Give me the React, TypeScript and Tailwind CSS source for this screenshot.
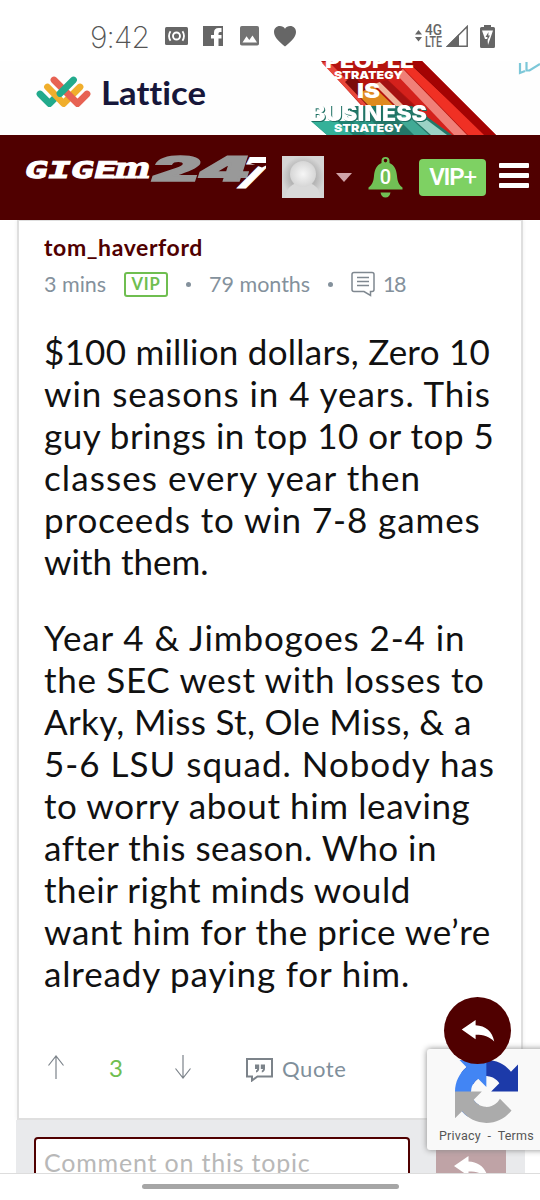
import type { ReactNode } from "react";
import cn from "clsx";

type LineProps = {
  children: ReactNode;
  className?: string;
};

function Line({ children, className }: LineProps) {
  return <span className={cn("block whitespace-nowrap", className)}>{children}</span>;
}

function StatusBar() {
  return (
    <div className="flex h-[61px] shrink-0 items-start pl-[90px] pr-[45px] pt-[20px] text-[#666]">
      <span className="w-[75px] font-['Inter'] text-[30px] font-extralight leading-[34px] tracking-[-0.900px] text-[#555]">
        9:42
      </span>
      <svg className="mt-[7px] h-[18px] w-[23px]" viewBox="0 0 23 18">
        <rect width="23" height="18" rx="1.5" fill="#666" />
        <circle cx="11.5" cy="9" r="3.5" fill="none" stroke="#fff" strokeWidth="1.9" />
        <path d="M5.5 4.3q-3 4.7 0 9.4M17.5 4.3q3 4.7 0 9.4" fill="none" stroke="#fff" strokeWidth="1.8" />
      </svg>
      <svg className="ml-[15px] mt-[6px] h-5 w-5" viewBox="0 0 20 20">
        <path fill="#666" d="M0 0h20v20h-4.500v-7.500h3V9h-3V7.500q0-1.500 1.500-1.500h1.500V2H15.500q-4.500 0-4.500 4.500V9H8v3.500h3V20H0z" />
      </svg>
      <svg className="ml-[17px] mt-[6px] h-5 w-[19px]" viewBox="0 0 19 20">
        <rect width="19" height="19.500" rx="1.800" fill="#737373" />
        <path d="M2.500 16.500l4-6.200 2.800 3.800 3.200-4.600 4.500 7z" fill="#fff" />
      </svg>
      <svg className="ml-[15px] mt-[6px] h-[21px] w-[22px]" viewBox="0 0 22 21">
        <path
          fill="#666"
          d="M11 20.500C6 16.500 0 11.500 0 6 0 2.500 2.500 0 5.800 0 8 0 10 1 11 2.800 12 1 14 0 16.200 0 19.500 0 22 2.500 22 6c0 5.500-6 10.500-11 14.500z"
        />
      </svg>
      <svg className="ml-auto mt-[10px] h-[12px] w-[7px]" viewBox="0 0 7 12">
        <path d="M0 4.500L3.500 0 7 4.500zM0 7h7l-3.500 4.500z" fill="#666" />
      </svg>
      <svg
        className="ml-[2px] mt-[4px] h-6 w-[19px] overflow-visible font-['Roboto'] text-[14px] font-medium"
        viewBox="0 0 19 24"
        fill="#666"
      >
        <text x="1" y="11" textLength="17" lengthAdjust="spacingAndGlyphs">
          4G
        </text>
        <text x="1" y="22.500" textLength="17" lengthAdjust="spacingAndGlyphs">
          LTE
        </text>
      </svg>
      <svg className="ml-[3px] mt-[5px] h-[22px] w-[22px]" viewBox="0 0 22 22">
        <path d="M1.500 21.300H21.200V1.500z" fill="none" stroke="#666" strokeWidth="1.500" />
        <path d="M0 22L13 9v13z" fill="#666" />
      </svg>
      <svg className="ml-[12px] mt-[5px] h-[23px] w-[15px]" viewBox="0 0 15 23">
        <path d="M4 0h7v2h2.500Q15 2 15 3.500v18Q15 23 13.500 23h-12Q0 23 0 21.500v-18Q0 2 1.500 2H4z" fill="#666" />
        <path d="M2 5.500h11L8 20l-.5-6H5z" fill="#fff" />
        <path d="M8.500 7L5.500 12h2l-.5 4 3-5.500H8.300z" fill="#666" />
      </svg>
    </div>
  );
}

function LatticeMark() {
  return (
    <svg
      className="h-8 w-[55px] overflow-visible"
      viewBox="36 76.500 55 32"
      fill="none"
      strokeWidth="6.800"
      strokeLinecap="round"
      strokeLinejoin="round"
    >
      <path d="M40 94.500l9.500 9.500 8-8" stroke="#22aa8c" />
      <path d="M47.500 87.500l16 16.500 16.500-16.500" stroke="#f0ae2c" />
      <path d="M54 80.500l23.500 23.500L87 94.500" stroke="#e76253" />
      <path d="M60 94l13.500-13.500" stroke="#22aa8c" />
    </svg>
  );
}

function AdBanner() {
  return (
    <div className="flex h-[74px] shrink-0 items-start overflow-hidden bg-[#fefefe] pl-[36px]">
      <div className="flex items-start pt-[15px]">
        <LatticeMark />
        <svg className="ml-[11px] h-8 w-[105px] overflow-visible" viewBox="0 0 105 32">
          <text
            x="-1"
            y="28.500"
            textLength="105"
            lengthAdjust="spacingAndGlyphs"
            className="font-['Lato'] text-[33px] font-bold [font-variant-ligatures:none]"
            fill="#17173a"
          >
            Lattice
          </text>
        </svg>
      </div>
      <svg className="ml-[93px] h-[74px] w-[240px]" viewBox="300 61 240 74">
        <path d="M321 61h101l74 74H388z" fill="#b5140f" />
        <path d="M322 63l68 72h12l-74-74z" fill="#e8473a" />
        <path d="M345 82l50 53h14l-56-60z" fill="#7c0b0b" />
        <path d="M358 95l14-10 52 50h-26z" fill="#df8a1e" />
        <path d="M374 84l6-2 53 53h-8z" fill="#f1b59b" />
        <path d="M380 82l8-2 55 55h-8z" fill="#a31212" />
        <path d="M388 80l12-7 62 62h-15z" fill="#d4211c" />
        <path d="M396 74l7-5 64 66h-13z" fill="#f08078" />
        <path d="M398 61h13l74 74h-5z" fill="#7f0505" />
        <path d="M403 68l8-3 75 70h-18z" fill="#f03024" />
        <path d="M408 61h14l74 74h-12z" fill="#a40303" />
        <path d="M311 121h117l15 14H327z" fill="#1f8271" />
        <path d="M311 121l16 14h26l-16-14z" fill="#35b199" />
        <path d="M346 106h66l40 29H370z" fill="#237768" />
        <path d="M352 121h20l14 14h-20z" fill="#2a9583" />
        <path d="M395 116l12-1 22 20h-15z" fill="#41aa95" />
        <path d="M413 119l14 1 20 15h-16z" fill="#9bd2c5" />
        <g fill="#fff" className="font-['Inter'] font-black">
          <text x="325" y="67.500" fontSize="18" textLength="89" lengthAdjust="spacingAndGlyphs">
            PEOPLE
          </text>
          <text x="334" y="79" fontSize="11" textLength="69" lengthAdjust="spacingAndGlyphs">
            STRATEGY
          </text>
          <text x="357" y="98" fontSize="20" textLength="23" lengthAdjust="spacingAndGlyphs">
            IS
          </text>
          <text
            x="310"
            y="120.500"
            fontSize="21"
            textLength="117"
            lengthAdjust="spacingAndGlyphs"
            className="drop-shadow-[1px_1px_0_#1c6f62]"
          >
            BUSINESS
          </text>
          <text x="334" y="132" fontSize="11" textLength="69" lengthAdjust="spacingAndGlyphs">
            STRATEGY
          </text>
        </g>
        <path d="M520 63v10l5-2M526.500 62v8.500h3L540 64" fill="none" stroke="#7cc7d8" strokeWidth="2.200" />
      </svg>
    </div>
  );
}

function SiteLogo() {
  return (
    <svg className="h-[36px] w-[242px]" viewBox="24 154 242 36">
      <g transform="translate(0 178) skewX(-14)" fill="#fff" stroke="#fff" strokeWidth="1">
        <text
          x="23"
          y="0"
          textLength="92"
          lengthAdjust="spacingAndGlyphs"
          className="font-['DejaVu_Sans_Mono'] text-[23px] font-bold"
        >
          GIGE
        </text>
        <text
          x="112"
          y="0"
          textLength="37"
          lengthAdjust="spacingAndGlyphs"
          className="font-['DejaVu_Serif'] text-[29px] font-bold"
        >
          m
        </text>
      </g>
      <g
        transform="translate(0 181) skewX(-18)"
        className="font-['Inter'] text-[34px] font-black"
        fill="#999"
        stroke="#999"
        strokeWidth="1.500"
      >
        <text x="149" y="0" textLength="98" lengthAdjust="spacingAndGlyphs">
          24
        </text>
      </g>
      <g
        transform="translate(0 187.500) skewX(-26)"
        className="font-['Inter'] font-black"
        fill="#fff"
        stroke="#fff"
        strokeWidth="1"
      >
        <text x="234" y="0" fontSize="42" textLength="25" lengthAdjust="spacingAndGlyphs">
          7
        </text>
      </g>
      {/* notch between the bar and the leg of the seven */}
      <path d="M250 163h16v2.500l-4 2z" fill="#500000" />
    </svg>
  );
}

function Header() {
  return (
    <header className="flex h-[85px] shrink-0 items-start bg-[#500000] pl-[24px] pt-[19px]">
      <SiteLogo />
      <svg className="ml-[16px] mt-[2px] size-[42px]" viewBox="0 0 42 42">
        <defs>
          <radialGradient id="back">
            <stop offset="0" stopColor="#e0e0e0" />
            <stop offset="0.600" stopColor="#b4b4b4" />
            <stop offset="1" stopColor="#d5d5d5" />
          </radialGradient>
          <radialGradient id="head">
            <stop offset="0" stopColor="#f6f6f6" />
            <stop offset="1" stopColor="#d6d6d6" />
          </radialGradient>
        </defs>
        <rect width="42" height="42" fill="url(#back)" />
        <path d="M3 42q2-13 12-15h12q10 2 12 15z" fill="#d9d9d9" />
        <circle cx="21" cy="18" r="13" fill="url(#head)" />
      </svg>
      <svg className="ml-[12px] mt-[19px] h-[9px] w-4" viewBox="0 0 16 9">
        <path d="M0 0h16L8 9z" fill="#cfa3a8" />
      </svg>
      <svg className="ml-4 mt-[3px] h-[41px] w-[35px]" viewBox="0 0 35 41">
        <path
          fill="#71c055"
          fillRule="evenodd"
          d="M17.500 0a4 4 0 0 1 4 4v2c5 2 7 7 7.500 13 .5 6 2 9 5.500 11.500v2H.500v-2C4 28 5.500 25 6 19c.5-6 2.500-11 7.500-13V4a4 4 0 0 1 4-4zm0 1.800a1.800 1.800 0 1 0 0 3.600 1.800 1.800 0 0 0 0-3.600zM12.500 35.500h10q-1 5-5 5t-5-5z"
        />
        <text x="17.500" y="26.500" textAnchor="middle" className="font-['Roboto'] text-[20px] font-medium" fill="#fff">
          0
        </text>
      </svg>
      <button className="ml-4 mt-[5px] h-[37px] w-[67px] rounded bg-[#7ed163] font-['Roboto'] text-[24px] font-semibold leading-[35px] tracking-[-1.200px] text-white">
        VIP<span className="font-normal">+</span>
      </button>
      <div className="ml-[13px] mt-[9px] flex w-[30px] flex-col gap-[5px]">
        <span className="h-[5px] rounded-[1px] bg-white" />
        <span className="h-[5px] rounded-[1px] bg-white" />
        <span className="h-[5px] rounded-[1px] bg-white" />
      </div>
    </header>
  );
}

function PostMeta() {
  return (
    <div className="mt-[5px] flex h-[30px] items-center text-[21.500px] text-[#84919c]">
      <span className="w-[79px] whitespace-nowrap">3 mins</span>
      <span className="ml-px flex h-[25px] w-[44px] items-center justify-center rounded-[3px] border-2 border-[#6fbe50] text-[16.500px] font-bold tracking-[0.800px] text-[#6fbe50]">
        VIP
      </span>
      <span className="ml-[18px] size-[5px] rounded-full bg-[#84919c]" />
      <span className="ml-[18px] w-[101px] whitespace-nowrap">79 months</span>
      <span className="ml-[18px] size-[5px] rounded-full bg-[#84919c]" />
      <svg className="ml-[18px] h-[26px] w-6" viewBox="0 0 24 26" fill="none" stroke="#7f8890" strokeWidth="1.500">
        <path d="M3 1.500h18q2 0 2 2v15q0 2-2 2h-1.500v4L13 20.500H3q-2 0-2-2v-15q0-2 2-2z" />
        <path d="M6 6.500h12M6 10.500h12M6 14.500h12" />
      </svg>
      <span className="ml-2 tracking-[-1.500px]">18</span>
    </div>
  );
}

function PostBody() {
  return (
    <div className="mt-[31px] text-[35px] leading-[42px] text-[#111]">
      <p>
        <Line className="tracking-[0.250px]">$100 million dollars, Zero 10</Line>
        <Line className="tracking-[0.950px]">win seasons in 4 years. This</Line>
        <Line className="tracking-[0.500px]">guy brings in top 10 or top 5</Line>
        <Line className="tracking-[1.100px]">classes every year then</Line>
        <Line className="tracking-[0.900px]">proceeds to win 7-8 games</Line>
        <Line>with them.</Line>
      </p>
      <p className="mt-[34px]">
        <Line className="tracking-[0.900px]">Year 4 &amp; Jimbogoes 2-4 in</Line>
        <Line className="tracking-[0.700px]">the SEC west with losses to</Line>
        <Line className="tracking-[0.350px]">Arky, Miss St, Ole Miss, &amp; a</Line>
        <Line className="tracking-[1px]">5-6 LSU squad. Nobody has</Line>
        <Line className="tracking-[0.600px]">to worry about him leaving</Line>
        <Line className="tracking-[0.500px]">after this season. Who in</Line>
        <Line className="tracking-[0.550px]">their right minds would</Line>
        <Line className="tracking-[0.600px]">want him for the price we’re</Line>
        <Line className="tracking-[0.850px]">already paying for him.</Line>
      </p>
    </div>
  );
}

function PostActions() {
  return (
    <div className="mt-[59px] flex h-[30px] items-center text-[22px] text-[#7f8f9b]">
      <svg className="-mt-[3px] ml-1 h-6 w-4" viewBox="0 0 16 24" fill="none" stroke="#7c838a" strokeWidth="1.200">
        <path d="M8 24V1M.5 10.500L8 1l7.500 9.500" />
      </svg>
      <span className="ml-[45px] w-[14px] text-[24px] text-[#6fbe50]">3</span>
      <svg className="-mt-[3px] ml-[52px] h-6 w-4" viewBox="0 0 16 24" fill="none" stroke="#7c838a" strokeWidth="1.200">
        <path d="M8 0v23M.5 13.500L8 23l7.500-9.500" />
      </svg>
      <svg className="ml-[55px] mt-[3px] h-6 w-[27px]" viewBox="0 0 27 24">
        <path d="M1 1h25v17.500H11.500L6 22.500v-4H1z" fill="none" stroke="#7c838a" strokeWidth="2" />
        <path d="M9 6.500h4.200v4q0 3-3.200 4v-2q1.200-.5 1.200-1.500H9zM14.800 6.500H19v4q0 3-3.200 4v-2q1.200-.5 1.200-1.500h-2.200z" fill="#7c838a" />
      </svg>
      <span className="ml-[9px] tracking-[0.600px]">Quote</span>
    </div>
  );
}

function ReplyIcon({ className }: { className: string }) {
  return (
    <svg className={className} viewBox="0 0 34 23">
      <path d="M0 10L14.500 0v5.500C25 6 32 12 34 22.500 29 17.500 23 15.500 14.500 15.500V20z" fill="#fff" />
    </svg>
  );
}

function Recaptcha() {
  return (
    <div className="absolute left-[427px] top-[829px] flex h-[101px] w-[130px] flex-col rounded-[3px] bg-[#f9f9f9] shadow-[0_0_6px_#888]">
      <svg className="ml-[28px] mt-[11px] size-[63px]" viewBox="0 0 64 64">
        <path
          d="M64 31.955l-.002-1.370V4.687l-7.160 7.160C50.978 4.674 42.059.094 32.072.094c-10.393 0-19.626 4.960-25.460 12.640l11.736 11.860a15.550 15.550 0 0 1 4.754-5.334c2.050-1.600 4.952-2.906 8.968-2.906.485 0 .860.057 1.135.163 4.976.393 9.288 3.140 11.828 7.124l-8.307 8.307L64 31.953"
          fill="#1c3aa9"
        />
        <path
          d="M31.862.094l-1.370.002H4.594l7.160 7.160C4.580 13.116 0 22.035 0 32.022c0 10.393 4.960 19.626 12.640 25.460l11.860-11.736a15.550 15.550 0 0 1-5.334-4.754c-1.600-2.050-2.906-4.952-2.906-8.968 0-.485.057-.860.163-1.135.393-4.976 3.140-9.288 7.124-11.828l8.307 8.307L31.860.094"
          fill="#4285f4"
        />
        <path
          d="M.001 32.045L.003 33.400v25.900l7.160-7.160c5.860 7.174 14.780 11.754 24.766 11.754 10.393 0 19.626-4.960 25.460-12.640L45.650 39.400a15.550 15.550 0 0 1-4.754 5.334c-2.050 1.600-4.952 2.906-8.968 2.906-.485 0-.860-.057-1.135-.163-4.976-.393-9.288-3.140-11.828-7.124l8.307-8.307c-10.522.040-22.400.066-27.264-.002"
          fill="#ababab"
        />
      </svg>
      <span className="ml-3 mt-[5px] whitespace-nowrap font-['Roboto'] text-[12.500px] leading-4 tracking-[0.220px] text-[#555]">
        Privacy&nbsp; -&nbsp; Terms
      </span>
    </div>
  );
}

export default function App() {
  return (
    <div className="flex h-[1200px] w-[540px] flex-col overflow-hidden bg-white font-['Lato',sans-serif]">
      <StatusBar />
      <AdBanner />
      <Header />
      <main className="relative h-[953px] shrink-0 overflow-hidden px-[17px]">
        <article className="-mt-px h-[901px] w-[506px] border-2 border-[#dfdfdf] bg-white pl-[25px] pt-[9px] shadow-[0_0_4px_#eee]">
          <h2 className="h-[34px] text-[23px] font-bold leading-[34px] tracking-[0.600px] text-[#500000]">
            tom_haverford
          </h2>
          <PostMeta />
          <PostBody />
          <PostActions />
        </article>
        <div className="-mx-px flex h-[60px] w-[509px] items-start bg-[#e9eaec] pl-[18px] pt-[17px]">
          <div className="h-[60px] w-[376px] rounded-[4px] border-2 border-[#500000] bg-white pl-[8px] pt-[6px] text-[25px] leading-[34px] tracking-[0.800px] text-[#b8b8b8]">
            Comment on this topic
          </div>
          <div className="ml-[26px] h-[60px] w-[70px] bg-[#bfa3a6] pl-[18px] pt-[19px]">
            <ReplyIcon className="h-[23px] w-[34px]" />
          </div>
        </div>
        <Recaptcha />
        <button className="absolute left-[444px] top-[777px] flex size-[67px] items-center justify-center rounded-full bg-[#500000]">
          <ReplyIcon className="h-[22px] w-[34px]" />
        </button>
      </main>
      <footer className="flex h-[27px] shrink-0 justify-center border-t border-[#ddd] bg-white pt-[10px]">
        <span className="h-[5px] w-[257px] rounded-full bg-[#a6a6a6]" />
      </footer>
    </div>
  );
}
